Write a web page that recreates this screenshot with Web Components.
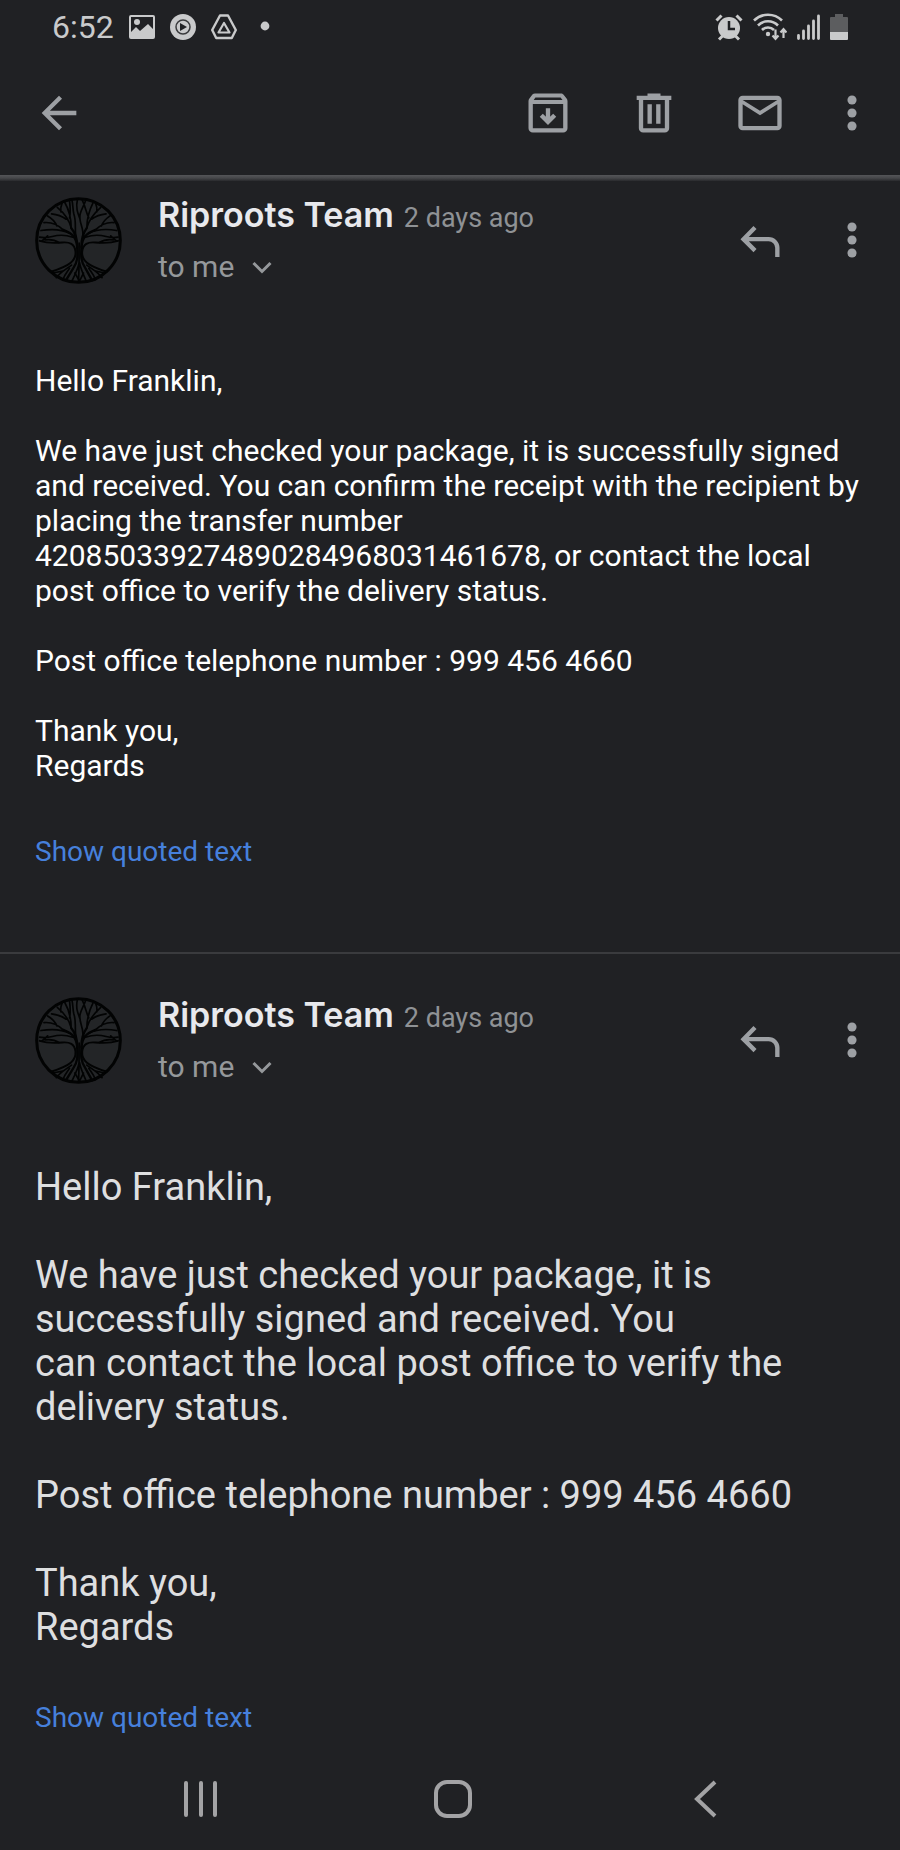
<!DOCTYPE html>
<html lang="en">
<head>
  <meta charset="utf-8">
  <meta name="viewport" content="width=device-width, initial-scale=1">
  <title>Riproots Team</title>
  <style>
    body {
      margin: 0;
      background-color: #202124;
      color: #fff;
      font-family: Roboto, "Liberation Sans", sans-serif;
    }
  </style>
</head>
<body>
  <mail-screen>
    <status-bar slot="status" time="6:52"></status-bar>
    <mail-toolbar slot="toolbar"></mail-toolbar>

    <mail-message first sender="Riproots Team" sent="2 days ago" to="to me">
      Hello Franklin,<br>
      <br>
      We have just checked your package, it is successfully signed and received. You can confirm the receipt with the recipient by placing the transfer number 420850339274890284968031461678, or contact the local post office to verify the delivery status.<br>
      <br>
      Post office telephone number : 999 456 4660<br>
      <br>
      Thank you,<br>
      Regards
    </mail-message>

    <mail-message large sender="Riproots Team" sent="2 days ago" to="to me">
      Hello Franklin,<br>
      <br>
      We have just checked your package, it is successfully signed and received. You<br>
      can contact the local post office to verify the delivery status.<br>
      <br>
      Post office telephone number : 999 456 4660<br>
      <br>
      Thank you,<br>
      Regards
    </mail-message>

    <nav-bar slot="nav"></nav-bar>
  </mail-screen>

  <script>
    /**
     * The shapes of the 24 unit action icons.
     */
    const icons = {
      back: '<path d="M20 11H7.8l5.6-5.6L12 4l-8 8 8 8 1.4-1.4L7.8 13H20z"/>',
      archive: '<path d="M20.5 5.2l-1.4-1.7c-.2-.3-.6-.5-1.1-.5H6c-.5 0-.9.2-1.2.5L3.5 5.2C3.2 5.6 3 6 3 6.5V19c0 1.1.9 2 2 2h14c1.1 0 2-.9 2-2V6.5c0-.5-.2-.9-.5-1.3zM6.2 4.9h11.6l.9 1.1H5.4zM5 19V7.8h14V19z"/><path d="M12 9.8v6M8.900 13l3.100 3.100 3.100-3.100" fill="none" stroke="currentColor" stroke-width="2"/>',
      trash: '<path d="M15 4V3H9v1H4v2h1v13c0 1.1.9 2 2 2h10c1.1 0 2-.9 2-2V6h1V4zm2 15H7V6h10zM9 8h2v9H9zm4 0h2v9h-2z"/>',
      mail: '<path d="M22 6c0-1.1-.9-2-2-2H4c-1.1 0-2 .9-2 2v12c0 1.1.9 2 2 2h16c1.1 0 2-.9 2-2zm-2 0l-8 5-8-5zm0 12H4V8l8 5 8-5z"/>',
      more: '<circle cx="12" cy="6" r="2.1"/><circle cx="12" cy="12" r="2.1"/><circle cx="12" cy="18" r="2.1"/>',
      reply: '<path d="M9.700 6.200L4.400 11.600l5.300 5.300M4.400 11.600H16a4 4 0 0 1 4 4v4.200" fill="none" stroke="currentColor" stroke-width="2"/>'
    }

    /**
     * Creates a template from a string of markup.
     *
     * @param {string} html - The markup.
     * @returns {HTMLTemplateElement} The template.
     */
    function createTemplate (html) {
      const template = document.createElement('template')
      template.innerHTML = html
      return template
    }

    // Button with a single icon in it.
    const buttonTemplate = createTemplate(`
      <style>
        :host {
          display: block;
          color: #9da0a4;
        }
        button {
          display: block;
          padding: 0;
          border: 0;
          background: none;
          color: inherit;
          cursor: pointer;
        }
        svg {
          display: block;
          width: 52px;
          height: 52px;
          fill: currentColor;
        }
      </style>
      <button type="button"><svg viewBox="0 0 24 24" aria-hidden="true"></svg></button>
    `)

    customElements.define('icon-button',
      /**
       * Represents an icon button.
       */
      class extends HTMLElement {
        constructor () {
          super()
          this.attachShadow({ mode: 'open' })
            .appendChild(buttonTemplate.content.cloneNode(true))
        }

        /**
         * Called when the element is inserted into the DOM.
         */
        connectedCallback () {
          this.shadowRoot.querySelector('svg').innerHTML = icons[this.getAttribute('icon')]
          this.shadowRoot.querySelector('button').setAttribute('aria-label', this.getAttribute('label'))
        }
      }
    )

    const statusTemplate = createTemplate(`
      <style>
        :host {
          display: flex;
          justify-content: space-between;
          align-items: center;
          box-sizing: border-box;
          height: 51px;
          padding: 2px 52px 0;
          color: #c9cacb;
          font-size: 32px;
          line-height: 38px;
        }
        .left, .right {
          display: flex;
          align-items: center;
        }
        .left {
          gap: 15px;
        }
        .right {
          gap: 10px;
        }
        svg {
          display: block;
          height: 28px;
          fill: currentColor;
        }
        .line {
          fill: none;
          stroke: currentColor;
        }
      </style>
      <div class="left">
        <span id="time"></span>
        <svg width="26" height="28" viewBox="0 0 26 28" aria-hidden="true">
          <path fill-rule="evenodd" d="M2 2h22a2 2 0 0 1 2 2v20a2 2 0 0 1-2 2H2a2 2 0 0 1-2-2V4a2 2 0 0 1 2-2zm0 2v15l5-5 4 4 8-7 5 5V4z"/>
          <circle cx="8" cy="9" r="3"/>
        </svg>
        <svg width="26" height="28" viewBox="0 0 26 28" aria-hidden="true">
          <circle cx="13" cy="14" r="13"/>
          <circle cx="13" cy="14" r="7" fill="none" stroke="#3a3b3d" stroke-width="1.5"/>
          <path d="M10 10l7 4-7 4z" fill="#202124"/>
        </svg>
        <svg width="26" height="28" viewBox="0 0 26 28" aria-hidden="true">
          <path class="line" stroke-width="2.4" stroke-linejoin="round" d="M9 2.5h8l7.800 14.500-4 8H5.200l-4-8z"/>
          <path class="line" stroke-width="2.2" stroke-linejoin="round" d="M13 10l5.500 9.500h-11z"/>
        </svg>
        <svg width="26" height="28" viewBox="0 0 26 28" aria-hidden="true">
          <circle cx="13" cy="13" r="4.4"/>
        </svg>
      </div>
      <div class="right">
        <svg width="28" height="28" viewBox="0 0 28 28" aria-hidden="true">
          <circle cx="14" cy="15" r="11"/>
          <path class="line" stroke-width="3" d="M1.500 7.500l5-5M26.500 7.500l-5-5M4 26.500l4-4M24 26.500l-4-4"/>
          <path d="M14 8v8h6" fill="none" stroke="#202124" stroke-width="2.5"/>
        </svg>
        <svg width="34" height="28" viewBox="0 0 34 28" aria-hidden="true">
          <path class="line" stroke-width="2.6" d="M1 7.500a20 20 0 0 1 28 0M5 12.500a14 14 0 0 1 20 0M9 17a8.500 8.500 0 0 1 12 0"/>
          <circle cx="15" cy="21" r="2.2"/>
          <path class="line" stroke-width="2.2" d="M22.500 16.500v9M19.500 22.500l3 3.300 3-3.300M30.500 25v-8M27.500 19.500l3-3.300 3 3.300"/>
        </svg>
        <svg width="23" height="28" viewBox="0 0 23 28" aria-hidden="true">
          <path class="line" stroke-width="2.8" stroke-linecap="round" d="M1.500 22.500v3M6.500 18v7.500M11.500 13v12.500M16.500 8v17.500M21.500 3v22.500"/>
        </svg>
        <svg width="18" height="28" viewBox="0 0 18 28" aria-hidden="true">
          <path d="M5 1h8v3h4a1 1 0 0 1 1 1v14H0V5a1 1 0 0 1 1-1h4z" fill="#5c5d5f"/>
          <path d="M0 19h18v7a1 1 0 0 1-1 1H1a1 1 0 0 1-1-1z"/>
        </svg>
      </div>
    `)

    customElements.define('status-bar',
      /**
       * Represents the status bar of the phone.
       */
      class extends HTMLElement {
        constructor () {
          super()
          this.attachShadow({ mode: 'open' })
            .appendChild(statusTemplate.content.cloneNode(true))
        }

        /**
         * Called when the element is inserted into the DOM.
         */
        connectedCallback () {
          this.shadowRoot.querySelector('#time').textContent = this.getAttribute('time')
        }
      }
    )

    const toolbarTemplate = createTemplate(`
      <style>
        :host {
          display: block;
        }
        header {
          display: flex;
          align-items: center;
          justify-content: space-between;
          height: 124px;
          padding: 0 22px 0 33px;
        }
        .actions {
          display: flex;
          gap: 54px;
        }
        .more {
          margin-left: -14px;
        }
        .shadow {
          height: 6px;
          background: linear-gradient(#545558, #46474a 50%, #292a2d);
        }
      </style>
      <header>
        <icon-button icon="back" label="Back"></icon-button>
        <div class="actions">
          <icon-button icon="archive" label="Archive"></icon-button>
          <icon-button icon="trash" label="Delete"></icon-button>
          <icon-button icon="mail" label="Mark as unread"></icon-button>
          <icon-button class="more" icon="more" label="More options"></icon-button>
        </div>
      </header>
      <div class="shadow"></div>
    `)

    customElements.define('mail-toolbar',
      /**
       * Represents the toolbar above the conversation.
       */
      class extends HTMLElement {
        constructor () {
          super()
          this.attachShadow({ mode: 'open' })
            .appendChild(toolbarTemplate.content.cloneNode(true))
        }
      }
    )

    // Round logo, a tree with its crown and roots inside a ring.
    const avatarTemplate = createTemplate(`
      <style>
        :host {
          display: block;
          flex: none;
        }
        svg {
          display: block;
          width: 87px;
          height: 87px;
          fill: none;
          stroke: #020303;
          stroke-width: 5;
          stroke-linecap: round;
        }
      </style>
      <svg viewBox="14 21 262 262" role="img" aria-label="Riproots">
        <circle cx="145" cy="152" r="126" fill="#232527" stroke-width="9"/>
        <!-- trunk -->
        <path stroke-width="7" d="M141 170c2 30 2 46-12 66l-22 36M154 170c-2 30-2 46 12 66l20 36"/>
        <path d="M147 160c-1 40 1 60-2 116M147 218c-4 22-12 36-22 56M148 218c4 22 12 36 20 56"/>
        <!-- lower arms -->
        <path stroke-width="6" d="M28 153c24 8 46 7 68 5 22-2 38 4 40 28 2 26-16 42-74 60M264 153c-24 8-46 7-68 5-22-2-38 4-40 28-2 26 16 42 74 60"/>
        <!-- crown, left side -->
        <path stroke-width="7" d="M141 172c-2-28-14-42-42-52M141 168c0-28-8-42-18-54"/>
        <path d="M128 142c-18-6-40-8-62-2-16 4-28 4-38 2M118 130c-24-12-48-14-86-8M99 120c-18-18-34-24-58-22M80 108c-6-14-14-22-28-30M123 114c-6-24-20-44-42-62M108 88c-14-10-26-14-44-16M92 66c-2-10 0-18 4-28M123 114c0-28-4-50-20-78M118 84c4-16 2-34 0-52M137 140c-4-28 2-44-6-68-4-16-2-28-6-42M52 138c-8 8-10 10-18 16M86 158c-12-8-26-10-42-8"/>
        <!-- crown, right side -->
        <path stroke-width="7" d="M154 172c2-28 14-42 42-52M154 168c0-28 6-40 16-54"/>
        <path d="M166 142c18-6 40-8 62-2 16 4 26 4 36 2M176 130c24-12 50-14 84-8M196 120c18-18 34-24 56-22M214 108c6-14 14-22 26-30M170 114c6-24 22-44 42-62M184 88c14-10 26-14 44-16M200 66c2-10 0-18-4-28M170 114c0-28 6-50 20-78M176 84c-8-16-10-34-20-54M158 140c4-28-14-44-8-68 4-16 12-26 18-44M242 138c8 8 10 10 18 16M208 158c12-8 26-10 42-8M150 88c-8-20-14-36-8-60"/>
        <!-- roots -->
        <path d="M124 226c-22 16-34 22-46 38M118 236c-8 12-16 20-20 34M98 244l-30 6M170 226c22 16 34 22 46 38M176 236c8 12 16 20 20 34M196 244l28 6M134 250l14 24M160 250l-12 24"/>
      </svg>
    `)

    customElements.define('tree-avatar',
      /**
       * Represents the logo of the sender.
       */
      class extends HTMLElement {
        constructor () {
          super()
          this.attachShadow({ mode: 'open' })
            .appendChild(avatarTemplate.content.cloneNode(true))
        }
      }
    )

    const messageTemplate = createTemplate(`
      <style>
        :host {
          display: block;
          padding: 41px 35px 84px;
          border-top: 2px solid #3a3b3e;
        }
        :host([first]) {
          padding-top: 14px;
          border-top: 0;
        }
        :host([large]) {
          padding-bottom: 12px;
        }
        header {
          display: flex;
          align-items: center;
          gap: 36px;
          margin-right: -13px;
        }
        .info {
          flex: 1;
        }
        .from {
          display: flex;
          align-items: baseline;
          gap: 10px;
          line-height: 40px;
        }
        h2 {
          margin: 0;
          color: #e8e9ed;
          font: 600 34px/40px Inter, sans-serif;
        }
        time {
          color: #8f9295;
          font-size: 27px;
        }
        button {
          display: flex;
          align-items: center;
          padding: 0;
          border: 0;
          background: none;
          font: inherit;
          cursor: pointer;
        }
        .to {
          gap: 18px;
          margin-top: 11px;
          color: #95989b;
          font-size: 30px;
          line-height: 36px;
        }
        .to svg {
          width: 20px;
          height: 14px;
          fill: none;
          stroke: currentColor;
          stroke-width: 3;
        }
        .actions {
          display: flex;
          gap: 40px;
        }
        .body {
          margin: 78px 0 53px;
          font-size: 30px;
          line-height: 35px;
        }
        :host([large]) .body {
          margin-top: 80px;
          color: #dedfe0;
          font-size: 38px;
          line-height: 44px;
        }
        .quoted {
          color: #4680dc;
          font-size: 28px;
          line-height: 32px;
        }
      </style>
      <article>
        <header>
          <tree-avatar></tree-avatar>
          <div class="info">
            <div class="from">
              <h2></h2>
              <time></time>
            </div>
            <button class="to" type="button">
              <span></span>
              <svg viewBox="0 0 20 14" aria-hidden="true"><path d="M1.500 3l8.500 8.500L18.500 3"/></svg>
            </button>
          </div>
          <div class="actions">
            <icon-button icon="reply" label="Reply"></icon-button>
            <icon-button icon="more" label="More options"></icon-button>
          </div>
        </header>
        <div class="body"><slot></slot></div>
        <button class="quoted" type="button">Show quoted text</button>
      </article>
    `)

    customElements.define('mail-message',
      /**
       * Represents one message of the conversation.
       */
      class extends HTMLElement {
        constructor () {
          super()
          this.attachShadow({ mode: 'open' })
            .appendChild(messageTemplate.content.cloneNode(true))
        }

        /**
         * Called when the element is inserted into the DOM.
         */
        connectedCallback () {
          this.shadowRoot.querySelector('h2').textContent = this.getAttribute('sender')
          this.shadowRoot.querySelector('time').textContent = this.getAttribute('sent')
          this.shadowRoot.querySelector('.to span').textContent = this.getAttribute('to')
        }
      }
    )

    const navTemplate = createTemplate(`
      <style>
        :host {
          display: block;
        }
        nav {
          display: grid;
          grid-template-columns: repeat(3, 1fr);
          height: 103px;
          padding: 0 67px 0 73px;
        }
        button {
          display: flex;
          align-items: center;
          justify-content: center;
          padding: 0;
          border: 0;
          background: none;
          color: #a3a3a5;
          cursor: pointer;
        }
        svg {
          width: 40px;
          height: 40px;
          fill: none;
          stroke: currentColor;
          stroke-width: 4;
        }
      </style>
      <nav>
        <button type="button" aria-label="Recent apps">
          <svg viewBox="0 0 40 40"><path stroke-linecap="round" d="M6 4v32M21 4v32M35 4v32"/></svg>
        </button>
        <button type="button" aria-label="Home">
          <svg viewBox="0 0 40 40"><rect x="3" y="3" width="34" height="34" rx="11"/></svg>
        </button>
        <button type="button" aria-label="Back">
          <svg viewBox="0 0 40 40"><path d="M29 3L11 20l18 17"/></svg>
        </button>
      </nav>
    `)

    customElements.define('nav-bar',
      /**
       * Represents the navigation bar of the phone.
       */
      class extends HTMLElement {
        constructor () {
          super()
          this.attachShadow({ mode: 'open' })
            .appendChild(navTemplate.content.cloneNode(true))
        }
      }
    )

    const screenTemplate = createTemplate(`
      <style>
        :host {
          display: flex;
          flex-direction: column;
          min-height: 100vh;
        }
        main {
          flex: 1;
        }
      </style>
      <slot name="status"></slot>
      <slot name="toolbar"></slot>
      <main><slot></slot></main>
      <slot name="nav"></slot>
    `)

    customElements.define('mail-screen',
      /**
       * Represents the whole screen.
       */
      class extends HTMLElement {
        constructor () {
          super()
          this.attachShadow({ mode: 'open' })
            .appendChild(screenTemplate.content.cloneNode(true))
        }
      }
    )
  </script>
</body>
</html>
